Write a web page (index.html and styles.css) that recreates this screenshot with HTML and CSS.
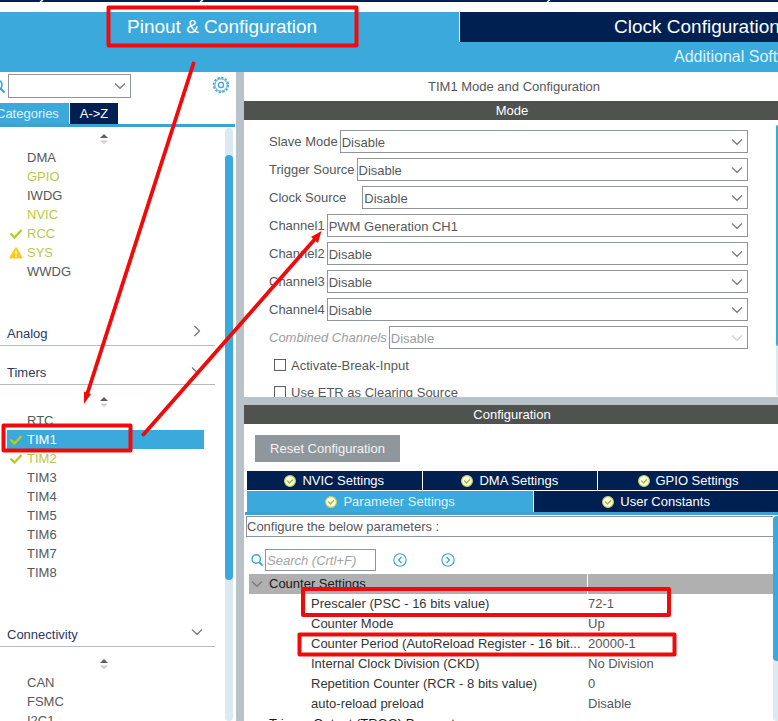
FILE: index.html
```html
<!DOCTYPE html>
<html lang="en">
<head>
<meta charset="utf-8">
<title>Pinout &amp; Configuration</title>
<link rel="stylesheet" href="styles.css">
</head>
<body>
<svg class="defs" aria-hidden="true">
  <symbol id="chevron" viewBox="0 0 12 8"><path d="M1 1.5 6 6.3 11 1.5" fill="none" stroke="currentColor" stroke-width="1.2"/></symbol>
  <symbol id="chevron-right" viewBox="0 0 8 12"><path d="M1.5 1 6.5 6 1.5 11" fill="none" stroke="currentColor" stroke-width="1.3"/></symbol>
  <symbol id="sorter" viewBox="0 0 10 12"><path d="M1 5 5 1 9 5z" fill="#5c5f61"/><path d="M1 7.500h8L5 11z" fill="#cdcdcd"/></symbol>
  <symbol id="tick" viewBox="0 0 14 12"><path d="M1.500 5.500 5.500 9.500 12.500 2" fill="none" stroke="#b5cb2d" stroke-width="2.400"/></symbol>
  <symbol id="warning" viewBox="0 0 14 12"><path d="M6 1q1-1.300 2 0l5.300 9q.6 1.600-.9 1.600H1.600Q.1 11.600.7 10z" fill="#fdcb13"/><path d="M7 3.500V7.600M7 8.600V10" stroke="#fff" stroke-width="1.300"/></symbol>
  <symbol id="search" viewBox="0 0 12 12"><circle cx="5.200" cy="5" r="4.200" fill="none" stroke="#3aa3d8" stroke-width="1.400"/><path d="M8 8 11.600 11.600" stroke="#3aa3d8" stroke-width="1.800"/></symbol>
  <symbol id="badge" viewBox="0 0 12 12"><circle cx="6" cy="6" r="5.400" fill="#fffff0" stroke="#c3d052" stroke-width="1.200"/><path d="M3.200 5.500 5.500 8 9 4.300" fill="none" stroke="#a9bc2c" stroke-width="1.400"/></symbol>
  <symbol id="gear" viewBox="0 0 18 18"><circle cx="9" cy="9" r="7.400" fill="none" stroke="#3aa3d8" stroke-width="1.500" stroke-dasharray="2.300 1.575"/><circle cx="9" cy="9" r="6.200" fill="none" stroke="#3aa3d8" stroke-width="1"/><circle cx="9" cy="9" r="2.600" fill="none" stroke="#3aa3d8" stroke-width="1.200"/></symbol>
  <symbol id="prev" viewBox="0 0 14 14"><circle cx="7" cy="7" r="6.200" fill="none" stroke="#3aa3d8" stroke-width="1.100"/><path d="M8.500 4 5.500 7 8.500 10" fill="none" stroke="#3aa3d8" stroke-width="1.300"/></symbol>
  <symbol id="next" viewBox="0 0 14 14"><circle cx="7" cy="7" r="6.200" fill="none" stroke="#3aa3d8" stroke-width="1.100"/><path d="M5.500 4 8.500 7 5.500 10" fill="none" stroke="#3aa3d8" stroke-width="1.300"/></symbol>
</svg>

<div class="strip"></div>
<header class="top">
  <nav class="main-tabs">
    <button class="main-tab active">Pinout &amp; Configuration</button>
    <button class="main-tab">Clock Configuration</button>
  </nav>
  <div class="sub-bar"><a href="#software">Additional Software</a></div>
</header>

<main class="work">
  <aside class="side">
    <div class="side-search">
      <svg class="side-lens"><use href="#search"/></svg>
      <span class="combo"><select aria-label="Find peripheral"><option></option></select><svg class="chev"><use href="#chevron"/></svg></span>
      <button class="gear" aria-label="Settings"><svg><use href="#gear"/></svg></button>
    </div>
    <div class="side-tabs"><button class="side-tab cat">Categories</button><button class="side-tab">A-&gt;Z</button></div>
    <div class="side-body">
      <div class="tree">
        <div class="sorter first"><svg><use href="#sorter"/></svg></div>
        <ul class="items">
          <li>DMA</li>
          <li class="on">GPIO</li>
          <li>IWDG</li>
          <li class="on">NVIC</li>
          <li class="on"><svg><use href="#tick"/></svg>RCC</li>
          <li class="on"><svg><use href="#warning"/></svg>SYS</li>
          <li>WWDG</li>
        </ul>
        <button class="group">Analog<svg class="right"><use href="#chevron-right"/></svg></button>
        <button class="group">Timers<svg><use href="#chevron"/></svg></button>
        <div class="sorter"><svg><use href="#sorter"/></svg></div>
        <ul class="items">
          <li>RTC</li>
          <li class="selected"><svg><use href="#tick"/></svg>TIM1</li>
          <li class="on"><svg><use href="#tick"/></svg>TIM2</li>
          <li>TIM3</li>
          <li>TIM4</li>
          <li>TIM5</li>
          <li>TIM6</li>
          <li>TIM7</li>
          <li>TIM8</li>
        </ul>
        <button class="group">Connectivity<svg><use href="#chevron"/></svg></button>
        <div class="sorter"><svg><use href="#sorter"/></svg></div>
        <ul class="items">
          <li>CAN</li>
          <li>FSMC</li>
          <li>I2C1</li>
        </ul>
      </div>
      <div class="scroll side-scroll"><div class="thumb"></div></div>
    </div>
  </aside>

  <section class="content">
    <h1>TIM1 Mode and Configuration</h1>
    <h2>Mode</h2>
    <div class="mode">
      <form class="fields">
        <div class="field"><label for="slave">Slave Mode</label><span class="combo"><select id="slave"><option>Disable</option></select><svg class="chev"><use href="#chevron"/></svg></span></div>
        <div class="field"><label for="trigger">Trigger Source</label><span class="combo"><select id="trigger"><option>Disable</option></select><svg class="chev"><use href="#chevron"/></svg></span></div>
        <div class="field wide"><label for="clock">Clock Source</label><span class="combo"><select id="clock"><option>Disable</option></select><svg class="chev"><use href="#chevron"/></svg></span></div>
        <div class="field"><label for="ch1">Channel1</label><span class="combo"><select id="ch1"><option>PWM Generation CH1</option></select><svg class="chev"><use href="#chevron"/></svg></span></div>
        <div class="field"><label for="ch2">Channel2</label><span class="combo"><select id="ch2"><option>Disable</option></select><svg class="chev"><use href="#chevron"/></svg></span></div>
        <div class="field"><label for="ch3">Channel3</label><span class="combo"><select id="ch3"><option>Disable</option></select><svg class="chev"><use href="#chevron"/></svg></span></div>
        <div class="field"><label for="ch4">Channel4</label><span class="combo"><select id="ch4"><option>Disable</option></select><svg class="chev"><use href="#chevron"/></svg></span></div>
        <div class="field off"><label for="combined">Combined Channels</label><span class="combo"><select id="combined" disabled><option>Disable</option></select><svg class="chev"><use href="#chevron"/></svg></span></div>
        <label class="check"><input type="checkbox">Activate-Break-Input</label>
        <label class="check"><input type="checkbox">Use ETR as Clearing Source</label>
      </form>
      <div class="scroll mode-scroll"><div class="thumb"></div></div>
    </div>
    <h2>Configuration</h2>
    <div class="config">
      <button class="reset">Reset Configuration</button>
      <div class="tabs">
        <div class="tab-row three">
          <button><svg><use href="#badge"/></svg>NVIC Settings</button>
          <button><svg><use href="#badge"/></svg>DMA Settings</button>
          <button><svg><use href="#badge"/></svg>GPIO Settings</button>
        </div>
        <div class="tab-row two">
          <button class="active"><svg><use href="#badge"/></svg>Parameter Settings</button>
          <button><svg><use href="#badge"/></svg>User Constants</button>
        </div>
      </div>
      <div class="params">
        <div class="params-main">
          <p>Configure the below parameters :</p>
          <div class="find">
            <svg class="lens"><use href="#search"/></svg>
            <input type="text" aria-label="Search parameters" placeholder="Search (Crtl+F)">
            <button aria-label="Previous"><svg><use href="#prev"/></svg></button>
            <button aria-label="Next"><svg><use href="#next"/></svg></button>
          </div>
          <table>
            <colgroup><col class="name-col"><col></colgroup>
            <tbody>
              <tr class="head"><th><svg><use href="#chevron"/></svg>Counter Settings</th><td></td></tr>
              <tr><td>Prescaler (PSC - 16 bits value)</td><td>72-1</td></tr>
              <tr><td>Counter Mode</td><td>Up</td></tr>
              <tr><td>Counter Period (AutoReload Register - 16 bit...</td><td>20000-1</td></tr>
              <tr><td>Internal Clock Division (CKD)</td><td>No Division</td></tr>
              <tr><td>Repetition Counter (RCR - 8 bits value)</td><td>0</td></tr>
              <tr><td>auto-reload preload</td><td>Disable</td></tr>
              <tr class="sub"><th>Trigger Output (TRGO) Parameters</th><td></td></tr>
            </tbody>
          </table>
        </div>
        <div class="scroll param-scroll"><div class="thumb"></div></div>
      </div>
    </div>
  </section>
</main>

<svg class="notes" width="778" height="721" viewBox="0 0 778 721" aria-hidden="true">
  <g stroke="#fff" stroke-width="1.500"><path d="M43 0 40 2M203 0 200 2M550 0 547 2"/></g>
  <g fill="none" stroke="#f10a0a" stroke-width="4" stroke-linejoin="round" stroke-linecap="round">
    <rect x="108.500" y="7.500" width="248" height="38"/>
    <rect x="3.500" y="425.500" width="127" height="25"/>
    <rect x="303" y="589" width="366" height="26"/>
    <rect x="299.500" y="634.500" width="375" height="20"/>
    <path d="M193.500 63.500 87.500 393M143.500 434.500 315 239" stroke-width="3.800"/>
  </g>
  <path d="M84 404 84 391.500 91 394zM321.500 231 311 237 318 243z" fill="#f10a0a"/>
</svg>
</body>
</html>
```
FILE: styles.css
```css
* { box-sizing: border-box; }
body {
  margin: 0;
  height: 100vh;
  display: flex;
  flex-direction: column;
  overflow: hidden;
  position: relative;
  background: #fff;
  color: #55585a;
  font: 13px/19px "Liberation Sans", Arial, sans-serif;
}
button, select, input { font: inherit; color: inherit; margin: 0; border-radius: 0; }
button { border: 0; padding: 0; background: none; white-space: nowrap; }
svg { display: block; flex: none; }
.defs { position: absolute; width: 0; height: 0; }
.notes { position: absolute; left: 0; top: 0; pointer-events: none; }

.strip { height: 2px; background: #002052; flex: none; }
.top { margin-top: 10px; background: #3ba9dc; flex: none; color: #fff; }
.main-tabs { display: grid; grid-template-columns: 59% 41%; height: 30px; }
.main-tab { font-size: 19px; line-height: 30px; text-align: left; padding-left: 127px; }
.main-tab + .main-tab { background: #002052; border-left: 1px solid #fff; padding-left: 154px; overflow: hidden; }
.sub-bar { height: 30px; padding-left: 674px; overflow: hidden; white-space: nowrap; font-size: 16px; line-height: 30px; }
.sub-bar a { color: #dff3fc; text-decoration: none; }

.work { flex: 1; min-height: 0; display: flex; }
.side { width: 236px; flex: none; display: flex; flex-direction: column; overflow: hidden; }
.side-search { display: flex; height: 31px; padding-top: 2px; align-items: flex-start; flex: none; }
.side-lens { width: 14px; height: 14px; margin: 5px 3px 0 -9px; }
.side-search .combo { flex: none; width: 123px; height: 24px; }
.gear { margin: 2px 0 0 81px; }
.gear svg { width: 18px; height: 18px; }
.side-tabs { display: flex; gap: 1px; height: 24px; border-bottom: 3px solid #3ba3d4; margin-right: 1px; flex: none; }
.side-tab { width: 48px; background: #002052; color: #fff; line-height: 21px; }
.side-tab.cat { width: 69px; background: #3ba9dc; color: #dff3fc; text-align: left; text-indent: -4px; }
.side-body { flex: 1; min-height: 0; display: flex; justify-content: space-between; overflow: hidden; }
.tree { width: 215px; }
.sorter { height: 26px; padding: 11px 0 0 99px; }
.sorter.first { height: 21px; padding-top: 6px; }
.sorter svg { width: 10px; height: 12px; }
.items { list-style: none; margin: 0 11px 0 7px; padding: 0; }
.items li { height: 19px; padding-left: 20px; position: relative; }
.items svg { position: absolute; left: 2px; top: 4px; width: 14px; height: 12px; }
.items .on { color: #b9c941; }
.items .selected { background: #3ba9dc; color: #fff; }
.group { display: flex; width: 100%; height: 39px; padding: 17px 12px 0 7px; justify-content: space-between; border-bottom: 1px solid #b4bcc1; color: #2b3864; }
.items + .group { margin-top: 26px; }
.group svg { width: 12px; height: 8px; margin-top: 3px; color: #77797b; }
.group svg.right { width: 8px; height: 12px; margin: 1px 2px 0 0; }

.scroll { background: #dbe9f5; border-radius: 4px; flex: none; }
.thumb { background: #3ba9dc; border-radius: 4px; }
.side-scroll { width: 8px; margin: 1px 3px 0 0; padding-top: 27px; }
.side-scroll .thumb { height: 425px; }

.content { flex: 1; min-width: 0; display: flex; flex-direction: column; border-left: 8px solid #b8c3c9; }
h1, h2 { margin: 0; font-size: 13px; font-weight: 400; text-align: center; flex: none; }
h1 { line-height: 29px; padding-left: 6px; }
h2 { line-height: 19px; padding-left: 2px; color: #fff; background: #505250; }
.mode { height: 277px; flex: none; display: flex; overflow: hidden; }
.mode + h2 { border-top: 8px solid #b8c3c9; }
.fields { flex: 1; padding: 10px 28px 0 25px; }
.field { display: flex; gap: 2px; height: 23px; line-height: 23px; margin-bottom: 5px; }
.field.wide { gap: 16px; }
.field.off label { font-style: italic; color: #9b9d9f; }
.combo { flex: 1; min-width: 0; position: relative; display: block; height: 23px; }
.combo select { appearance: none; display: block; width: 100%; height: 100%; padding: 0 1px 2px; border: 1px solid #8f9599; background: #fff; outline: 0; }
.combo select:disabled { opacity: 1; color: #9a9c9e; }
.chev { position: absolute; right: 5px; top: 8px; width: 12px; height: 8px; color: #77797b; pointer-events: none; }
.off .chev { color: #cfd1d2; }
.check { display: flex; align-items: center; gap: 5px; height: 22px; margin: 0 0 5px 5px; }
.check input { appearance: none; width: 12px; height: 12px; border: 1px solid #5c5f61; background: #fff; }
.mode-scroll { width: 2px; margin: 5px 0 1px; border-radius: 2px 0 0 2px; }
.mode-scroll .thumb { height: 221px; border-radius: 2px 0 0 2px; }

.config { flex: 1; min-height: 0; display: flex; flex-direction: column; overflow: hidden; }
.reset { align-self: flex-start; margin: 11px 0 9px 11px; width: 145px; height: 27px; flex: none; background: #8f979d; color: #f1f3f4; }
.tabs { flex: none; margin-left: 1px; padding-left: 2px; border-bottom: 3px solid #3ba3d4; }
.tab-row { display: grid; gap: 1px; color: #fff; }
.tab-row.three { grid-template-columns: 33fr 33fr 34fr; margin-bottom: 1px; }
.tab-row.two { grid-template-columns: 54fr 46fr; }
.tab-row button { display: flex; align-items: center; justify-content: center; gap: 6px; background: #002052; height: 19px; }
.tab-row.two button { height: 21px; }
.tab-row button.active { background: #3ba9dc; color: #dff3fc; }
.tab-row svg { width: 12px; height: 12px; }
.params { flex: 1; min-height: 0; display: flex; margin: 1px 0 0 2px; overflow: hidden; }
.params-main { flex: 1; min-width: 0; }
.params p { margin: 0; height: 21px; border: 1px solid #8f9599; border-right: 0; }
.find { display: flex; align-items: center; height: 22px; margin: 12px 0 3px 5px; }
.find .lens { width: 12px; height: 12px; margin-right: 2px; }
.find input { width: 111px; height: 22px; padding: 0 1px; border: 1px solid #8f9599; font-style: italic; outline: 0; }
.find input::placeholder { color: #a2a4a6; opacity: 1; }
.find button { margin-left: 17px; }
.find button + button { margin-left: 34px; }
.find button svg { width: 14px; height: 14px; }
table { width: calc(100% - 3px); margin-left: 3px; border-collapse: collapse; table-layout: fixed; }
.name-col { width: 338px; }
tr { height: 20px; }
td, th { padding: 0 0 0 1px; font-weight: 400; text-align: left; white-space: nowrap; line-height: 20px; }
td:first-child { padding-left: 62px; color: #333537; }
th { padding-left: 20px; color: #17191b; position: relative; }
.head { background: #b0b0b0; }
.head th { border-right: 1px solid #fff; }
th svg { position: absolute; left: 2px; top: 6px; width: 12px; height: 8px; color: #77797b; }
.param-scroll { width: 5px; border-radius: 4px 0 0 4px; }
.param-scroll .thumb { height: 145px; border-radius: 4px 0 0 4px; }
```
